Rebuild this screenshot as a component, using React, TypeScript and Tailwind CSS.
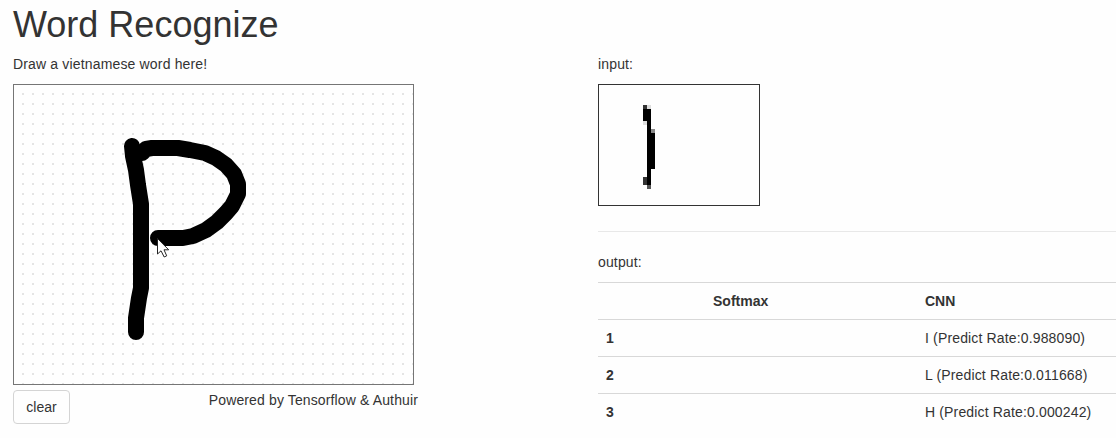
import React from 'react';

const rows = [
  { rank: '1', cnn: 'I (Predict Rate:0.988090)' },
  { rank: '2', cnn: 'L (Predict Rate:0.011668)' },
  { rank: '3', cnn: 'H (Predict Rate:0.000242)' },
];

function DrawingPad() {
  return (
    <svg width="401" height="301" viewBox="14 85 399 299" className="block border border-[#757575]">
      <defs>
        <pattern id="dots" x="14" y="85" width="10" height="10" patternUnits="userSpaceOnUse">
          <rect x="8" y="8" width="2" height="2" fill="#e4e4e4" />
        </pattern>
      </defs>
      <rect x="14" y="85" width="399" height="299" fill="url(#dots)" />
      <g fill="none" stroke="#000" strokeWidth="16" strokeLinecap="round" strokeLinejoin="round">
        <path d="M132 146L133 156L136 170L138 185L141 204V288L139 298L136 318V332" />
        <path d="M142 153L146 149L152 148H178L190 150L205 153L216 158L226 165L234 174L238 184V194L232 206L226 213L217 222L206 230L193 236L183 238H158" />
      </g>
      <path d="M157.5 238.5V254L161 250.8L164.2 257L166.7 255.8L164 249.8H168.7Z" fill="#fff" stroke="#222" strokeWidth="1" />
    </svg>
  );
}

function InputPreview() {
  return (
    <svg width="162" height="122" viewBox="0 0 160 120" shapeRendering="crispEdges" className="block border border-[#333]">
      <path d="M44 24h8v76h-4v-64h-4zM52 48h4v36h-4z" fill="#000" />
      <path d="M44 20h4v4h-4zM44 92h4v8h-4z" fill="#333" />
      <path d="M48 100h4v4h-4z" fill="#555" />
      <path d="M52 44h4v4h-4z" fill="#888" />
      <path d="M48 20h4v4h-4zM44 36h4v4h-4z" fill="#ddd" />
    </svg>
  );
}

export default function App() {
  return (
    <main className="h-[438px] w-full overflow-hidden bg-[#fefefe] pl-[13px] pt-[5px] font-['Liberation_Sans',Arial,sans-serif] text-sm leading-5 text-[#333]">
      <h1 className="text-[36px] leading-10">Word Recognize</h1>
      <div className="flex pt-[9px]">
        <section className="w-[585px] shrink-0">
          <p className="mb-2.5 tracking-[0.16px]">Draw a vietnamese word here!</p>
          <DrawingPad />
          <div className="flex w-[405px] items-start justify-between pt-[5px]">
            <button className="h-[34px] w-[57px] rounded border border-[#d4d4d4] bg-[#fefefe]">clear</button>
            <p className="tracking-[0.13px]">Powered by Tensorflow &amp; Authuir</p>
          </div>
        </section>
        <section className="min-w-0 flex-1">
          <p className="mb-2.5 tracking-[0.15px]">input:</p>
          <InputPreview />
          <hr className="mb-5 mt-[25px] border-[#e8e8e8]" />
          <p className="mb-2.5 tracking-[0.15px]">output:</p>
          <table className="w-full table-fixed border-collapse text-left">
            <colgroup>
              <col className="w-[107px]" />
              <col className="w-[212px]" />
              <col />
            </colgroup>
            <thead>
              <tr className="h-[37px] border-t border-[#d8d8d8]">
                <th />
                <th className="px-2">Softmax</th>
                <th className="px-2">CNN</th>
              </tr>
            </thead>
            <tbody>
              {rows.map((row) => (
                <tr key={row.rank} className="h-[37px] border-t border-[#d8d8d8]">
                  <th className="px-2">{row.rank}</th>
                  <td />
                  <td className="whitespace-nowrap px-2 tracking-[0.15px]">{row.cnn}</td>
                </tr>
              ))}
            </tbody>
          </table>
        </section>
      </div>
    </main>
  );
}
